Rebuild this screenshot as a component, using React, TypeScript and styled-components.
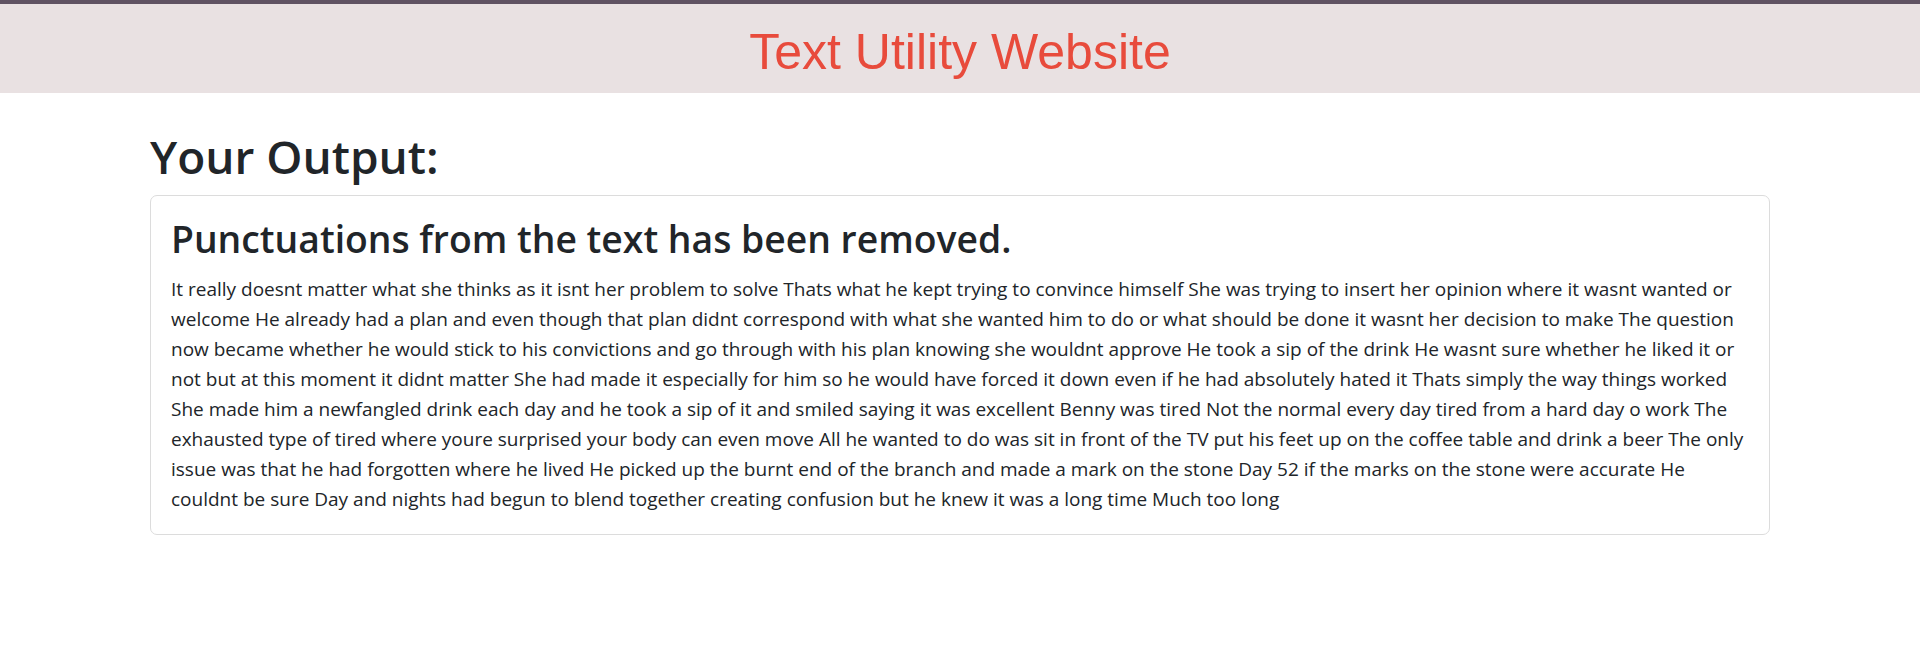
import styled, { createGlobalStyle } from "styled-components";

const outputText =
  "It really doesnt matter what she thinks as it isnt her problem to solve Thats what he kept trying to convince himself She was trying to insert her opinion where it wasnt wanted or welcome He already had a plan and even though that plan didnt correspond with what she wanted him to do or what should be done it wasnt her decision to make The question now became whether he would stick to his convictions and go through with his plan knowing she wouldnt approve He took a sip of the drink He wasnt sure whether he liked it or not but at this moment it didnt matter She had made it especially for him so he would have forced it down even if he had absolutely hated it Thats simply the way things worked She made him a newfangled drink each day and he took a sip of it and smiled saying it was excellent Benny was tired Not the normal every day tired from a hard day o work The exhausted type of tired where youre surprised your body can even move All he wanted to do was sit in front of the TV put his feet up on the coffee table and drink a beer The only issue was that he had forgotten where he lived He picked up the burnt end of the branch and made a mark on the stone Day 52 if the marks on the stone were accurate He couldnt be sure Day and nights had begun to blend together creating confusion but he knew it was a long time Much too long";

export default function App() {
  return (
    <>
      <GlobalStyle />
      <Header>
        <SiteTitle>Text Utility Website</SiteTitle>
      </Header>
      <Container>
        <PageHeading>Your Output:</PageHeading>
        <Card>
          <CardTitle>Punctuations from the text has been removed.</CardTitle>
          <CardText>{outputText}</CardText>
        </Card>
      </Container>
    </>
  );
}

const GlobalStyle = createGlobalStyle`
  * {
    box-sizing: border-box;
  }

  body {
    margin: 0;
    background: #fff;
    color: #212529;
    font-family: "Open Sans", "Noto Sans", sans-serif;
  }
`;

const Header = styled.header`
  border-top: 4px solid #605262;
  background-color: #e9e1e2;
  padding: 18px 0 11px;
  text-align: center;
`;

const SiteTitle = styled.h1`
  margin: 0;
  font-family: "Liberation Sans", Arial, sans-serif;
  font-weight: 400;
  font-size: 50px;
  line-height: 60px;
  color: #e84b3c;
`;

const Container = styled.main`
  width: 1620px;
  margin: 0 auto;
  padding-top: 36px;
`;

const PageHeading = styled.h2`
  margin: 0 0 11px;
  font-size: 46px;
  font-weight: 600;
  line-height: 1.2;
  color: #212529;
`;

const Card = styled.section`
  border: 1px solid #dcdcdc;
  border-radius: 7px;
  padding: 21px 20px 20px;
`;

const CardTitle = styled.h3`
  margin: 0 0 12px;
  font-size: 37.3px;
  font-weight: 600;
  line-height: 1.2;
`;

const CardText = styled.p`
  margin: 0;
  font-size: 19px;
  line-height: 30px;
`;
